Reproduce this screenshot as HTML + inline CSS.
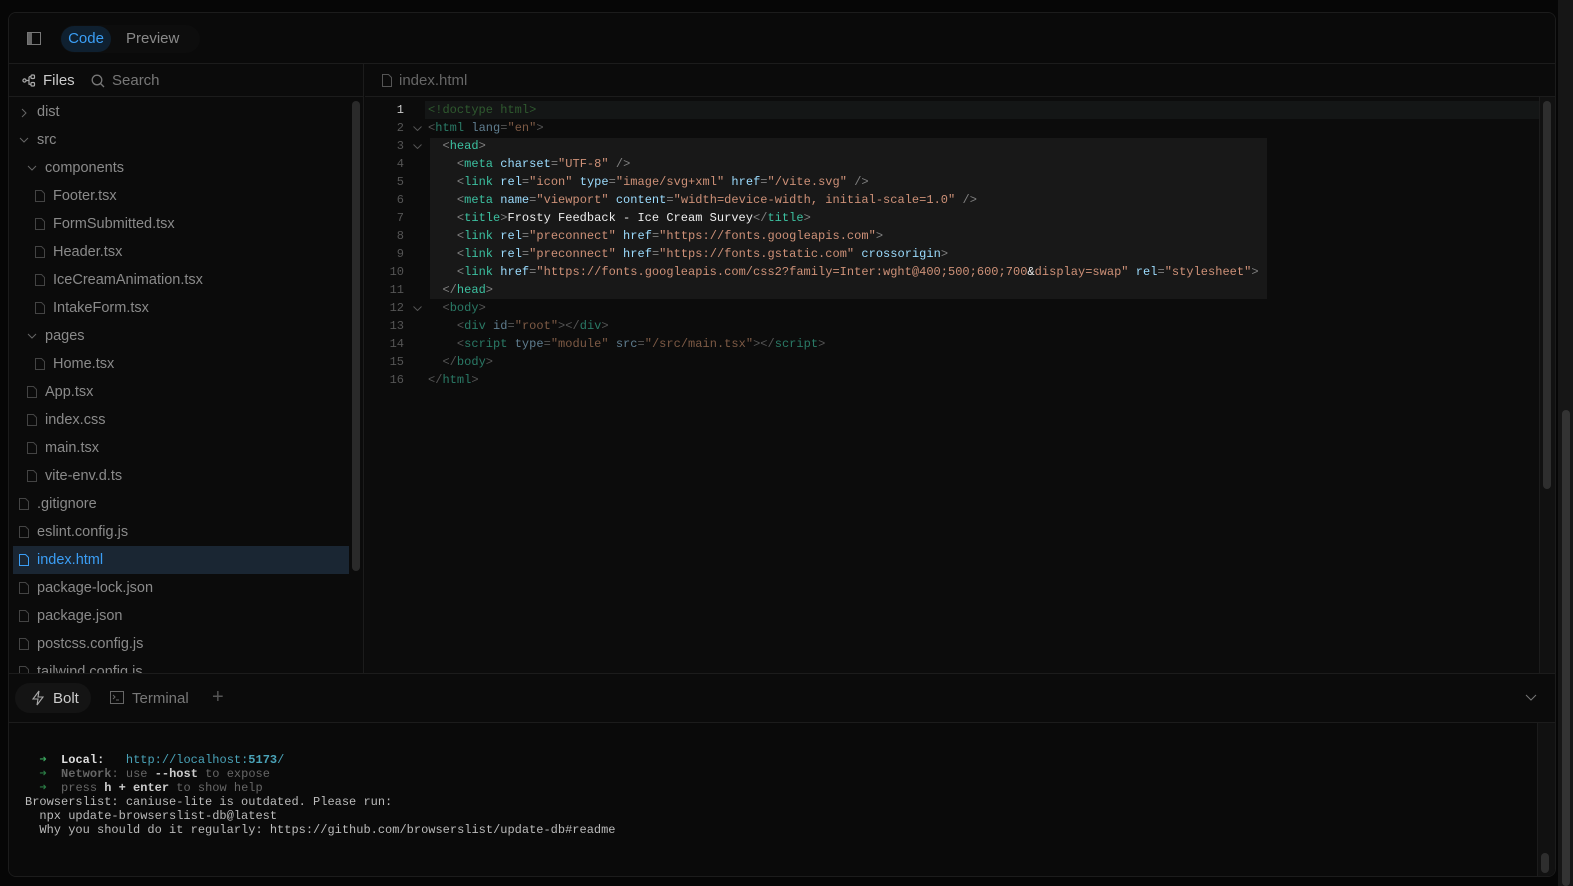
<!DOCTYPE html>
<html><head><meta charset="utf-8"><style>
*{margin:0;padding:0;box-sizing:border-box}
body{width:1573px;height:886px;background:#060606;font-family:"Liberation Sans",sans-serif;overflow:hidden;position:relative}
.panel{position:absolute;left:8px;top:12px;width:1548px;height:865px;background:#0b0b0b;border:1px solid #1c1c1c;border-radius:8px;overflow:hidden}
.abs{position:absolute}
.hdr{left:0;top:0;width:100%;height:51px;border-bottom:1px solid #1c1c1c;background:#0a0a0a}
.seg{left:51px;top:12px;height:28px;width:140px;border-radius:14px;background:#0d0d0d}
.code-tab{left:52px;top:13px;height:26px;width:50px;border-radius:13px;background:#0f2030;color:#3b9ef5;font-size:15px;line-height:26px;text-align:center}
.prev{left:117px;top:13px;color:#8a8a8a;font-size:15px;line-height:26px}
.fbar{left:0;top:51px;width:355px;height:33px;border-bottom:1px solid #1c1c1c;border-right:1px solid #1c1c1c}
.ebar{left:356px;top:51px;right:0;height:33px;border-bottom:1px solid #1c1c1c}
.side{left:0;top:84px;width:355px;height:576px;border-right:1px solid #1c1c1c}
.row{position:absolute;left:4px;width:336px;height:28px;color:#8a8a8a;font-size:14.5px;line-height:28px}
.row.sel{background:#1a2633;color:#3b9ef5}
.row svg{position:absolute;top:8px}
.row .ch{top:10px}
.ed{left:356px;top:84px;right:0;height:576px;background:#0c0c0c}
.mono{font-family:"Liberation Mono",monospace;font-size:12px;white-space:pre}
.ln{position:absolute;left:0;width:39px;text-align:right;color:#555;height:18px;line-height:18px}
.ln.cur{color:#ccc}
.cl{position:absolute;left:63px;height:18px;line-height:18px;letter-spacing:0.02px}
.t{color:#3cc0a0}.b{color:#808080}.a{color:#9cdcfe}.s{color:#ce9178}.w{color:#eee}
.d .t{color:#2a7a66}.d .b{color:#555}.d .a{color:#5f7d8f}.d .s{color:#7d5a45}
.fold{position:absolute;left:48px}
.bot{left:0;top:660px;width:100%;height:50px;border-top:1px solid #1c1c1c;border-bottom:1px solid #1c1c1c;background:#0b0b0b}
.term{left:0;top:710px;right:0;bottom:0;background:#0a0a0a}
.tl{position:absolute;left:16px;line-height:14px;color:#bbb}
</style></head><body>
<div class="panel">
 <div class="abs hdr">
  <svg class="abs" style="left:18px;top:19px" width="14" height="13" viewBox="0 0 14 13"><rect x="0.5" y="0.5" width="13" height="12" fill="none" stroke="#777"/><rect x="1" y="1" width="4" height="11" fill="#666"/></svg>
  <div class="abs seg"></div>
  <div class="abs code-tab">Code</div>
  <div class="abs prev">Preview</div>
 </div>
 <div class="abs fbar">
  <svg class="abs" style="left:13px;top:10px" width="14" height="13" viewBox="0 0 14 13" fill="none" stroke="#aaa" stroke-width="1.2"><circle cx="2.5" cy="6.5" r="1.6"/><rect x="9" y="1" width="3.5" height="3.5" rx="1"/><rect x="9" y="8.5" width="3.5" height="3.5" rx="1"/><path d="M4 6.5h3M7 2.7v8M7 2.7h2M7 10.3h2"/></svg>
  <div class="abs" style="left:34px;top:8px;color:#ccc;font-size:15px">Files</div>
  <svg class="abs" style="left:82px;top:10px" width="14" height="14" viewBox="0 0 14 14" fill="none" stroke="#777" stroke-width="1.3"><circle cx="6" cy="6" r="4.8"/><path d="M9.5 9.5l3.5 3.5"/></svg>
  <div class="abs" style="left:103px;top:8px;color:#777;font-size:15px">Search</div>
 </div>
 <div class="abs ebar">
  <svg class="abs" style="left:17px;top:10px" width="10" height="13" viewBox="0 0 10 13" fill="none" stroke="#555"><path d="M0.5 0.5h6l3 3v9h-9z"/></svg>
  <div class="abs" style="left:34px;top:8px;color:#666;font-size:15px">index.html</div>
 </div>
 <div class="abs side">
  <div class="abs" style="left:343px;top:4px;width:8px;height:470px;border-radius:4px;background:#2a2a2a"></div>
 </div>
 <div class="abs" style="left:0;top:85px;width:350px;height:575px">
  <div class="row" style="top:0"><svg class="ch" style="left:8px" width="6" height="10" viewBox="0 0 6 10" fill="none" stroke="#666"><path d="M1 1l4 4-4 4"/></svg><span style="position:absolute;left:24px">dist</span></div>
  <div class="row" style="top:28px"><svg class="ch" style="left:6px;top:11px" width="10" height="6" viewBox="0 0 10 6" fill="none" stroke="#666"><path d="M1 1l4 4 4-4"/></svg><span style="position:absolute;left:24px">src</span></div>
  <div class="row" style="top:56px"><svg class="ch" style="left:14px;top:11px" width="10" height="6" viewBox="0 0 10 6" fill="none" stroke="#666"><path d="M1 1l4 4 4-4"/></svg><span style="position:absolute;left:32px">components</span></div>
  <div class="row" style="top:84px"><svg style="left:22px" width="10" height="12" viewBox="0 0 10 12" fill="none" stroke="#444"><path d="M.5.5h6l3 3v8h-9z"/></svg><span style="position:absolute;left:40px">Footer.tsx</span></div>
  <div class="row" style="top:112px"><svg style="left:22px" width="10" height="12" viewBox="0 0 10 12" fill="none" stroke="#444"><path d="M.5.5h6l3 3v8h-9z"/></svg><span style="position:absolute;left:40px">FormSubmitted.tsx</span></div>
  <div class="row" style="top:140px"><svg style="left:22px" width="10" height="12" viewBox="0 0 10 12" fill="none" stroke="#444"><path d="M.5.5h6l3 3v8h-9z"/></svg><span style="position:absolute;left:40px">Header.tsx</span></div>
  <div class="row" style="top:168px"><svg style="left:22px" width="10" height="12" viewBox="0 0 10 12" fill="none" stroke="#444"><path d="M.5.5h6l3 3v8h-9z"/></svg><span style="position:absolute;left:40px">IceCreamAnimation.tsx</span></div>
  <div class="row" style="top:196px"><svg style="left:22px" width="10" height="12" viewBox="0 0 10 12" fill="none" stroke="#444"><path d="M.5.5h6l3 3v8h-9z"/></svg><span style="position:absolute;left:40px">IntakeForm.tsx</span></div>
  <div class="row" style="top:224px"><svg class="ch" style="left:14px;top:11px" width="10" height="6" viewBox="0 0 10 6" fill="none" stroke="#666"><path d="M1 1l4 4 4-4"/></svg><span style="position:absolute;left:32px">pages</span></div>
  <div class="row" style="top:252px"><svg style="left:22px" width="10" height="12" viewBox="0 0 10 12" fill="none" stroke="#444"><path d="M.5.5h6l3 3v8h-9z"/></svg><span style="position:absolute;left:40px">Home.tsx</span></div>
  <div class="row" style="top:280px"><svg style="left:14px" width="10" height="12" viewBox="0 0 10 12" fill="none" stroke="#444"><path d="M.5.5h6l3 3v8h-9z"/></svg><span style="position:absolute;left:32px">App.tsx</span></div>
  <div class="row" style="top:308px"><svg style="left:14px" width="10" height="12" viewBox="0 0 10 12" fill="none" stroke="#444"><path d="M.5.5h6l3 3v8h-9z"/></svg><span style="position:absolute;left:32px">index.css</span></div>
  <div class="row" style="top:336px"><svg style="left:14px" width="10" height="12" viewBox="0 0 10 12" fill="none" stroke="#444"><path d="M.5.5h6l3 3v8h-9z"/></svg><span style="position:absolute;left:32px">main.tsx</span></div>
  <div class="row" style="top:364px"><svg style="left:14px" width="10" height="12" viewBox="0 0 10 12" fill="none" stroke="#444"><path d="M.5.5h6l3 3v8h-9z"/></svg><span style="position:absolute;left:32px">vite-env.d.ts</span></div>
  <div class="row" style="top:392px"><svg style="left:6px" width="10" height="12" viewBox="0 0 10 12" fill="none" stroke="#444"><path d="M.5.5h6l3 3v8h-9z"/></svg><span style="position:absolute;left:24px">.gitignore</span></div>
  <div class="row" style="top:420px"><svg style="left:6px" width="10" height="12" viewBox="0 0 10 12" fill="none" stroke="#444"><path d="M.5.5h6l3 3v8h-9z"/></svg><span style="position:absolute;left:24px">eslint.config.js</span></div>
  <div class="row sel" style="top:448px"><svg style="left:6px" width="10" height="12" viewBox="0 0 10 12" fill="none" stroke="#3b9ef5"><path d="M.5.5h6l3 3v8h-9z"/></svg><span style="position:absolute;left:24px">index.html</span></div>
  <div class="row" style="top:476px"><svg style="left:6px" width="10" height="12" viewBox="0 0 10 12" fill="none" stroke="#444"><path d="M.5.5h6l3 3v8h-9z"/></svg><span style="position:absolute;left:24px">package-lock.json</span></div>
  <div class="row" style="top:504px"><svg style="left:6px" width="10" height="12" viewBox="0 0 10 12" fill="none" stroke="#444"><path d="M.5.5h6l3 3v8h-9z"/></svg><span style="position:absolute;left:24px">package.json</span></div>
  <div class="row" style="top:532px"><svg style="left:6px" width="10" height="12" viewBox="0 0 10 12" fill="none" stroke="#444"><path d="M.5.5h6l3 3v8h-9z"/></svg><span style="position:absolute;left:24px">postcss.config.js</span></div>
  <div class="row" style="top:560px"><svg style="left:6px" width="10" height="12" viewBox="0 0 10 12" fill="none" stroke="#444"><path d="M.5.5h6l3 3v8h-9z"/></svg><span style="position:absolute;left:24px">tailwind.config.js</span></div>
 </div>
 <div class="abs ed mono">
  <div class="abs" style="left:60px;top:4px;width:1114px;height:18px;background:#141616"></div>
  <div class="abs" style="left:65px;top:41px;width:837px;height:161px;background:#181818"></div>
  <div class="abs" style="left:1174px;top:0;width:18px;height:576px;background:#111;border-left:1px solid #1c1c1c"></div>
  <div class="abs" style="left:1178px;top:4px;width:8px;height:388px;border-radius:4px;background:#2e2e2e"></div>
  <div class="ln cur" style="top:4px">1</div><div class="cl d" style="top:4px"><span style="color:#2f5a2f">&lt;!doctype html&gt;</span></div>
  <div class="ln" style="top:22px">2</div><svg class="fold" style="top:29px" width="9" height="5" viewBox="0 0 9 5" fill="none" stroke="#555"><path d="M.5.5l4 4 4-4"/></svg><div class="cl d" style="top:22px"><span class="b">&lt;</span><span class="t">html</span> <span class="a">lang</span><span class="b">=</span><span class="s">"en"</span><span class="b">&gt;</span></div>
  <div class="ln" style="top:40px">3</div><svg class="fold" style="top:47px" width="9" height="5" viewBox="0 0 9 5" fill="none" stroke="#555"><path d="M.5.5l4 4 4-4"/></svg><div class="cl" style="top:40px">  <span class="b">&lt;</span><span class="t">head</span><span class="b">&gt;</span></div>
  <div class="ln" style="top:58px">4</div><div class="cl" style="top:58px">    <span class="b">&lt;</span><span class="t">meta</span> <span class="a">charset</span><span class="b">=</span><span class="s">"UTF-8"</span> <span class="b">/&gt;</span></div>
  <div class="ln" style="top:76px">5</div><div class="cl" style="top:76px">    <span class="b">&lt;</span><span class="t">link</span> <span class="a">rel</span><span class="b">=</span><span class="s">"icon"</span> <span class="a">type</span><span class="b">=</span><span class="s">"image/svg+xml"</span> <span class="a">href</span><span class="b">=</span><span class="s">"/vite.svg"</span> <span class="b">/&gt;</span></div>
  <div class="ln" style="top:94px">6</div><div class="cl" style="top:94px">    <span class="b">&lt;</span><span class="t">meta</span> <span class="a">name</span><span class="b">=</span><span class="s">"viewport"</span> <span class="a">content</span><span class="b">=</span><span class="s">"width=device-width, initial-scale=1.0"</span> <span class="b">/&gt;</span></div>
  <div class="ln" style="top:112px">7</div><div class="cl" style="top:112px">    <span class="b">&lt;</span><span class="t">title</span><span class="b">&gt;</span><span class="w">Frosty Feedback - Ice Cream Survey</span><span class="b">&lt;/</span><span class="t">title</span><span class="b">&gt;</span></div>
  <div class="ln" style="top:130px">8</div><div class="cl" style="top:130px">    <span class="b">&lt;</span><span class="t">link</span> <span class="a">rel</span><span class="b">=</span><span class="s">"preconnect"</span> <span class="a">href</span><span class="b">=</span><span class="s">"https://fonts.googleapis.com"</span><span class="b">&gt;</span></div>
  <div class="ln" style="top:148px">9</div><div class="cl" style="top:148px">    <span class="b">&lt;</span><span class="t">link</span> <span class="a">rel</span><span class="b">=</span><span class="s">"preconnect"</span> <span class="a">href</span><span class="b">=</span><span class="s">"https://fonts.gstatic.com"</span> <span class="a">crossorigin</span><span class="b">&gt;</span></div>
  <div class="ln" style="top:166px">10</div><div class="cl" style="top:166px">    <span class="b">&lt;</span><span class="t">link</span> <span class="a">href</span><span class="b">=</span><span class="s">"https://fonts.googleapis.com/css2?family=Inter:wght@400;500;600;700</span><span class="w">&amp;</span><span class="s">display=swap"</span> <span class="a">rel</span><span class="b">=</span><span class="s">"stylesheet"</span><span class="b">&gt;</span></div>
  <div class="ln" style="top:184px">11</div><div class="cl" style="top:184px">  <span class="b">&lt;/</span><span class="t">head</span><span class="b">&gt;</span></div>
  <div class="ln" style="top:202px">12</div><svg class="fold" style="top:209px" width="9" height="5" viewBox="0 0 9 5" fill="none" stroke="#555"><path d="M.5.5l4 4 4-4"/></svg><div class="cl d" style="top:202px">  <span class="b">&lt;</span><span class="t">body</span><span class="b">&gt;</span></div>
  <div class="ln" style="top:220px">13</div><div class="cl d" style="top:220px">    <span class="b">&lt;</span><span class="t">div</span> <span class="a">id</span><span class="b">=</span><span class="s">"root"</span><span class="b">&gt;&lt;/</span><span class="t">div</span><span class="b">&gt;</span></div>
  <div class="ln" style="top:238px">14</div><div class="cl d" style="top:238px">    <span class="b">&lt;</span><span class="t">script</span> <span class="a">type</span><span class="b">=</span><span class="s">"module"</span> <span class="a">src</span><span class="b">=</span><span class="s">"/src/main.tsx"</span><span class="b">&gt;&lt;/</span><span class="t">script</span><span class="b">&gt;</span></div>
  <div class="ln" style="top:256px">15</div><div class="cl d" style="top:256px">  <span class="b">&lt;/</span><span class="t">body</span><span class="b">&gt;</span></div>
  <div class="ln" style="top:274px">16</div><div class="cl d" style="top:274px"><span class="b">&lt;/</span><span class="t">html</span><span class="b">&gt;</span></div>
 </div>
 <div class="abs bot">
  <div class="abs" style="left:6px;top:9px;width:76px;height:30px;border-radius:15px;background:#141414"></div>
  <svg class="abs" style="left:23px;top:16px" width="12" height="16" viewBox="0 0 12 16" fill="none" stroke="#aaa" stroke-width="1.1"><path d="M7 1L1 9h5l-1 6 6-8H6z"/></svg>
  <div class="abs" style="left:44px;top:16px;color:#ccc;font-size:15px">Bolt</div>
  <svg class="abs" style="left:101px;top:17px" width="14" height="13" viewBox="0 0 14 13" fill="none" stroke="#666"><rect x=".5" y=".5" width="13" height="12"/><path d="M3 4l2 2-2 2M6 9h3"/></svg>
  <div class="abs" style="left:123px;top:16px;color:#777;font-size:15px">Terminal</div>
  <div class="abs" style="left:203px;top:12px;color:#555;font-size:20px">+</div>
  <svg class="abs" style="left:1516px;top:20px" width="12" height="8" viewBox="0 0 12 8" fill="none" stroke="#777"><path d="M1 1l5 5 5-5"/></svg>
 </div>
 <div class="abs term mono">
  <div class="abs" style="left:1528px;top:0;width:18px;height:155px;background:#111;border-left:1px solid #1c1c1c"></div>
  <div class="abs" style="left:1532px;top:130px;width:8px;height:20px;border-radius:4px;background:#2e2e2e"></div>
  <div class="tl" style="top:30px">  <span style="color:#3aa55d">➜</span>  <b style="color:#ddd">Local</b><b style="color:#ddd">:</b>   <span style="color:#4aa3b8">http://localhost:<b>5173</b>/</span></div>
  <div class="tl" style="top:44px;color:#666">  <span style="color:#2a7a44">➜</span>  <b>Network</b>: use <b style="color:#ccc">--host</b> to expose</div>
  <div class="tl" style="top:58px;color:#666">  <span style="color:#2a7a44">➜</span>  press <b style="color:#ccc">h + enter</b> to show help</div>
  <div class="tl" style="top:72px">Browserslist: caniuse-lite is outdated. Please run:</div>
  <div class="tl" style="top:86px">  npx update-browserslist-db@latest</div>
  <div class="tl" style="top:100px">  Why you should do it regularly: https://github.com/browserslist/update-db#readme</div>
 </div>
</div>
<div class="abs" style="left:1558px;top:0;width:15px;height:886px;background:#161616"></div>
<div class="abs" style="left:1562px;top:410px;width:8px;height:476px;border-radius:4px;background:#333"></div>
</body></html>
